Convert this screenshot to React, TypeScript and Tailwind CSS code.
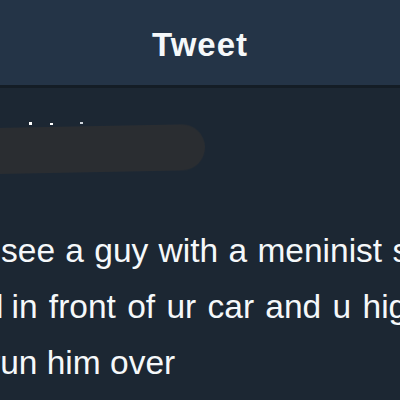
export default function App() {
  return (
    <div className="w-[400px] h-[400px] overflow-hidden bg-[#1c2733] text-[#f5f8fa]" style={{ fontFamily: '"Liberation Sans", Arial, sans-serif' }}>
      <header className="h-[85px] bg-[#243447] flex items-center justify-center">
        <h1 className="text-[33px] font-bold tracking-[1px] leading-none mt-[4px]">Tweet</h1>
      </header>
      <div className="h-[3px] bg-[#141d26]" />
      <div className="relative h-[135px] pt-[34px] pl-[29px]">
        <div className="flex items-start gap-[18px]">
          <span className="w-[3px] h-[3px] bg-white" />
          <span className="w-[3px] h-[2px] mt-[1px] bg-white" />
          <span className="w-[3px] h-[2px] ml-[9px] bg-[#cfd6dd]" />
        </div>
        <div className="flex gap-[8px] ml-[51px] mt-[44px]">
          <span className="w-[8px] h-[1px] bg-[#6b7580]" />
          <span className="w-[7px] h-[2px] bg-[#8a949e]" />
        </div>
        <div className="absolute left-[-30px] top-[36px] w-[235px] h-[46px] rounded-r-full bg-[#2a2d31] rotate-[-1.1deg] origin-right blur-[0.6px]" />
      </div>
      <div className="text-[33.5px] leading-[56px] whitespace-nowrap">
        <div className="ml-[1px] [word-spacing:1px]">see a guy with a meninist shirt</div>
        <div className="ml-[-4px] flex [word-spacing:2px]">
          <span>l</span>
          <span className="ml-[8px]">in front of ur car and u highkey wanna</span>
        </div>
        <div className="ml-[-11px]">run him over</div>
      </div>
    </div>
  );
}
